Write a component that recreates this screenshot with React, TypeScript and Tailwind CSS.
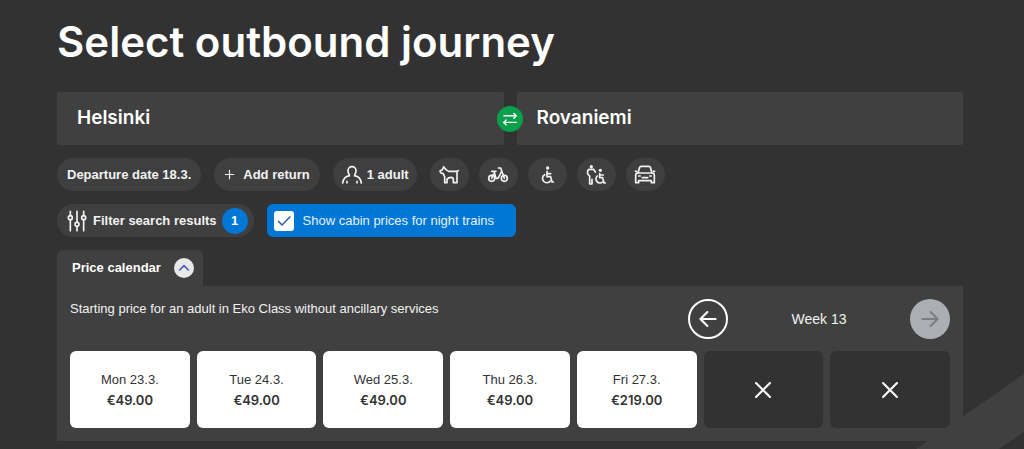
import { useState, type ReactNode } from "react";

interface Day {
  date: string; price: string | null;
}

const days: Day[] = [
  { date: "Mon 23.3.", price: "€49.00" },
  { date: "Tue 24.3.", price: "€49.00" },
  { date: "Wed 25.3.", price: "€49.00" },
  { date: "Thu 26.3.", price: "€49.00" },
  { date: "Fri 27.3.", price: "€219.00" },
  { date: "Sat 28.3.", price: null },
  { date: "Sun 29.3.", price: null },
];

function Icon({ children, className = "size-[22px]" }: { children: ReactNode; className?: string }) {
  return (
    <svg viewBox="0 0 66 66" fill="none" stroke="currentColor" strokeWidth="5" strokeLinecap="round" strokeLinejoin="round" className={`shrink-0 ${className}`} aria-hidden="true">
      {children}
    </svg>
  );
}

const extras = [
  { label: "Pet", icon: <><path d="M17 9 24 17 32 22H53Q58 22 61 20" /><path d="M17 9 13 17 6 21Q7 29 15 28L20 38V56H27V46Q31 40 39 40 46 40 46 47V56H57V22" /></> },
  { label: "Bicycle", icon: <><circle cx="14" cy="43" r="9" /><circle cx="52" cy="43" r="9" /><path d="M14 43 18 32H24L27 43H33Q38 37 42 25M21 23 24 32M14 22H27M34 12H41L52 43" /></> },
  { label: "Wheelchair", icon: <><circle cx="35" cy="12" r="5" fill="currentColor" stroke="none" /><path d="M33 22V38H44L48 54H52M33 29H44" /><path d="M26 32A13 13 0 1 0 43 51" /></> },
  { label: "Wheelchair with assistant", icon: <><circle cx="19" cy="8" r="5" fill="currentColor" stroke="none" /><circle cx="46" cy="19" r="5" fill="currentColor" stroke="none" /><path d="M14 36 8 30V20L12 16H26L31 24M14 36V60H21V46" /><path d="M44 29V41H53L57 57H61M44 33H55" /><path d="M37 36A12 12 0 1 0 53 54" /></> },
  { label: "Car", icon: <><path d="M12 27 17 10Q18 7 22 7H44Q48 7 49 10L54 27" /><path d="M5 56V34Q5 27 12 27H54Q61 27 61 34V56H52V50H14V56ZM14 36H19M47 36H52M25 41H41M4 22H8M58 22H62" /></> },
];

const pill = "flex h-[33px] items-center rounded-full bg-[#3f3f3f] text-[13px] font-bold text-[#f2f2f2]";
const station = "h-[53px] rounded-xs bg-[#404040] px-5 text-left font-['Inter',sans-serif] text-[19px] font-semibold text-white";

export default function App() {
  const [cabins, setCabins] = useState(true);
  const [open, setOpen] = useState(true);

  return (
    <div className="relative isolate min-h-screen overflow-hidden bg-[#323232] pt-[14px] pr-[61px] pb-2 pl-[57px] font-['Liberation_Sans',sans-serif] text-[#f2f2f2]">
      <svg viewBox="0 0 108 75" className="absolute right-0 bottom-0 -z-10 h-[75px] w-[108px]" aria-hidden="true">
        <path d="M0 75 108 0V58L83 75Z" fill="#404040" />
      </svg>

      <h1 className="font-['Inter',sans-serif] text-[42px] leading-[56px] font-semibold text-white">Select outbound journey</h1>

      <div className="relative mt-[22px] grid grid-cols-2 gap-[13px]">
        <button className={station}>Helsinki</button>
        <button className={station}>Rovaniemi</button>
        <button aria-label="Swap stations" className="absolute top-1/2 left-1/2 flex size-[26px] -translate-1/2 items-center justify-center rounded-full bg-[#0a9f4a] text-white">
          <Icon className="size-4"><path d="M8 20H58M49 10 59 20 49 30M58 47H8M17 37 7 47 17 57" strokeWidth="6" /></Icon>
        </button>
      </div>

      <div className="mt-[13px] flex items-center gap-[13px]">
        <button className={`${pill} px-[10px]`}>Departure date 18.3.</button>
        <button className={`${pill} gap-2 px-[10px]`}>
          <Icon className="size-[11px]"><path d="M33 8V58M8 33H58" strokeWidth="7" /></Icon>
          Add return
        </button>
        <button className={`${pill} gap-1 px-2`}>
          <Icon><path d="M25 35 24 30Q21 27 21 20A12 12 0 0 1 45 20Q45 27 42 30L41 35" /><path d="M25 35Q8 38 5 57M41 35Q58 38 61 57M18 57V52M48 57V52" /></Icon>
          1 adult
        </button>
        <div className="flex gap-[10px]">
          {extras.map(e => (
            <button key={e.label} aria-label={e.label} className={`${pill} w-[39px] justify-center`}><Icon>{e.icon}</Icon></button>
          ))}
        </div>
      </div>

      <div className="mt-[13px] flex gap-[13px]">
        <button className={`${pill} gap-[5px] pr-[6px] pl-[9px]`}>
          <Icon><path d="M13 4V17M13 29V62M33 4V37M33 49V62M53 4V17M53 29V62" /><circle cx="13" cy="23" r="6" /><circle cx="33" cy="43" r="6" /><circle cx="53" cy="23" r="6" /></Icon>
          Filter search results
          <span className="flex size-[26px] items-center justify-center rounded-full bg-[#0077d4] text-white">1</span>
        </button>
        <label className="flex h-[33px] items-center gap-[9px] rounded-md bg-[#0077d4] pr-[22px] pl-[7px] text-[13px] text-[#e6f1fb]">
          <span className="relative flex size-5">
            <input type="checkbox" checked={cabins} onChange={e => setCabins(e.target.checked)} className="size-5 appearance-none rounded-[3px] bg-white" />
            {cabins && <span className="pointer-events-none absolute inset-0 flex items-center justify-center text-[#2f5f9f]"><Icon className="size-4"><path d="M10 34 25 50 57 16" strokeWidth="6" /></Icon></span>}
          </span>
          Show cabin prices for night trains
        </label>
      </div>

      <button onClick={() => setOpen(!open)} aria-expanded={open} className="mt-[13px] flex h-9 items-center gap-[13px] rounded-t-md bg-[#404040] pr-[9px] pl-[15px] text-[13px] font-bold text-white">
        Price calendar
        <span className="flex size-5 items-center justify-center rounded-full bg-[#e8e8ea] text-[#3c5ab4]">
          <Icon className="size-3"><path d="M9 44 33 20 57 44" strokeWidth="8" /></Icon>
        </span>
      </button>
      {open && (
        <section className="bg-[#404040] p-[13px]">
          <div className="flex justify-between">
            <p className="text-[13px] leading-5">Starting price for an adult in Eko Class without ancillary services</p>
            <div className="flex w-[262px] items-center justify-between">
              <button aria-label="Previous week" className="flex size-10 items-center justify-center rounded-full border-2 border-white text-white">
                <Icon className="size-5"><path d="M58 33H8M31 10 8 33 31 56" strokeWidth="7" /></Icon>
              </button>
              <span className="text-sm">Week 13</span>
              <button aria-label="Next week" disabled className="flex size-10 items-center justify-center rounded-full bg-[#abafb3] text-[#7b7e81]">
                <Icon className="size-5"><path d="M8 33H58M35 10 58 33 35 56" strokeWidth="7" /></Icon>
              </button>
            </div>
          </div>
          <div className="mt-3 grid grid-cols-7 gap-[7px]">
            {days.map(d => d.price ? (
              <button key={d.date} className="h-[77px] rounded-md bg-white text-[13px] leading-5 text-[#333]">
                <span className="block">{d.date}</span>
                <span className="block font-['Inter',sans-serif] font-semibold">{d.price}</span>
              </button>
            ) : (
              <button key={d.date} disabled aria-label={d.date} className="flex h-[77px] items-center justify-center rounded-md bg-[#323232] text-white">
                <Icon className="size-5"><path d="M10 10 56 56M56 10 10 56" strokeWidth="7" /></Icon>
              </button>
            ))}
          </div>
        </section>
      )}
    </div>
  );
}
